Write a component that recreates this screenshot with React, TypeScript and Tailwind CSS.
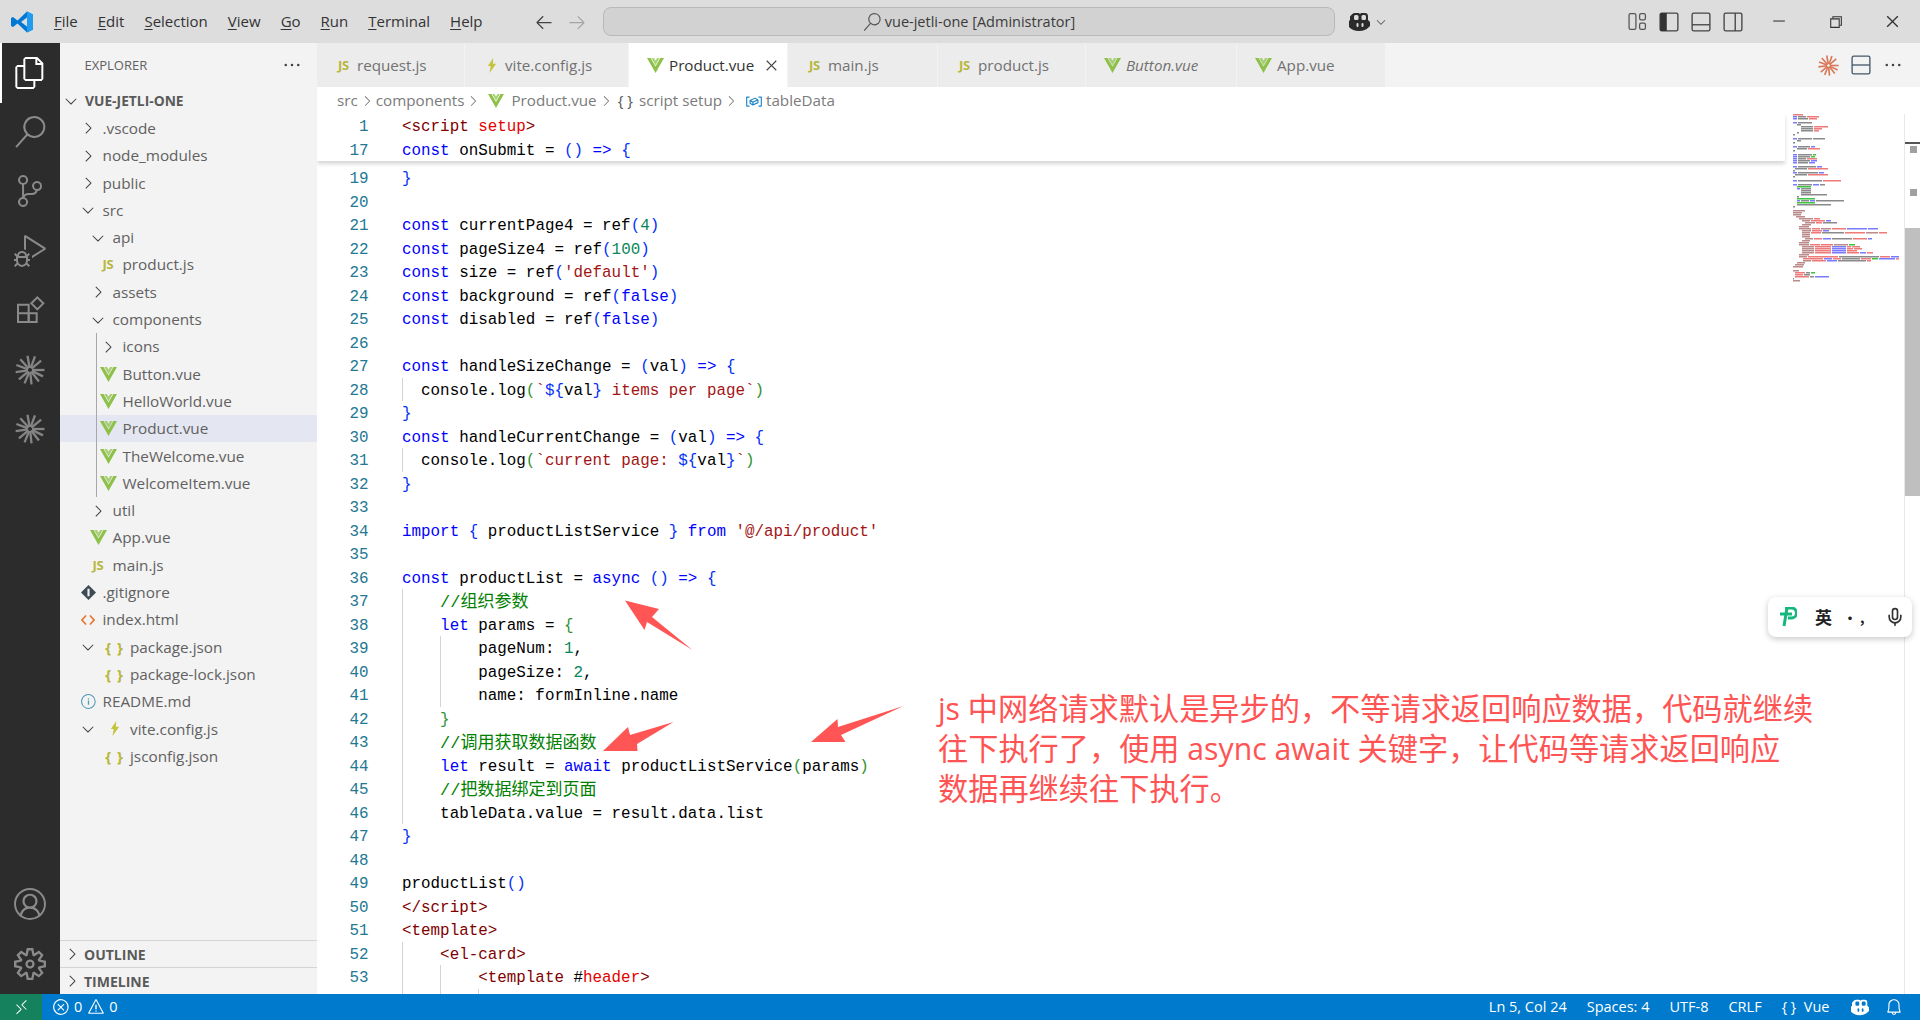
import type { ReactNode } from "react"
import {
  VscAccount,
  VscArrowLeft,
  VscArrowRight,
  VscBell,
  VscChevronDown,
  VscChevronRight,
  VscChromeClose,
  VscChromeMinimize,
  VscChromeRestore,
  VscClose,
  VscDebugAlt,
  VscEllipsis,
  VscError,
  VscFiles,
  VscInfo,
  VscRemote,
  VscSearch,
  VscSettingsGear,
  VscSourceControl,
  VscSymbolVariable,
  VscWarning,
} from "react-icons/vsc"
import { Mic } from "lucide-react"

const UI_FONT = "font-['Open_Sans','Noto_Sans_CJK_SC',sans-serif]"

function VueIcon({ className = "w-[17px] h-[15px]" }: { className?: string }) {
  return (
    <svg viewBox="0 0 17 15" className={className}>
      <path d="M0 0h3.6l4.9 8.6L13.4 0H17L8.5 15z" fill="#8dc149" />
      <path d="M4.4 0h2.5l1.6 2.8L10.1 0h2.5L8.5 7.2z" fill="#8dc149" opacity="0.75" />
    </svg>
  )
}

function JsIcon() {
  return <span className="text-[13px] font-bold text-[#b7b73b] leading-none tracking-tight">JS</span>
}

function BoltIcon() {
  return (
    <svg viewBox="0 0 12 18" className="w-[10px] h-[17px]">
      <path d="M7.5 0 1 9.5h3.4L3 18l8-11H7z" fill="#c4c43c" />
    </svg>
  )
}

function BracesIcon() {
  return <span className="text-[15px] font-bold text-[#b7b73b] leading-none tracking-[1px]">{"{ }"}</span>
}

function Burst({ color, size = 30 }: { color: string; size?: number }) {
  const spokes = [0, 26, 52, 84, 112, 140, 172, 200, 228, 260, 290, 320]
  return (
    <svg viewBox="-15 -15 30 30" width={size} height={size}>
      {spokes.map((a) => (
        <line
          key={a}
          x1={2 * Math.cos((a * Math.PI) / 180)}
          y1={2 * Math.sin((a * Math.PI) / 180)}
          x2={14.5 * Math.cos((a * Math.PI) / 180)}
          y2={14.5 * Math.sin((a * Math.PI) / 180)}
          stroke={color}
          strokeWidth="2.3"
        />
      ))}
    </svg>
  )
}

function CopilotFace({ fg, bg, className }: { fg: string; bg: string; className: string }) {
  return (
    <svg viewBox="0 0 22 20" className={className}>
      <path
        d="M6 1h3c1 0 1.6.5 2 1 .4-.5 1-1 2-1h3c2.200 0 3 1.500 3 3.500V8l2 2v4l-1 1c-2.500 2.500-5.500 4-10 4s-7.500-1.500-10-4l-1-1v-4l2-2V4.500C3 2.500 3.800 1 6 1z"
        fill={fg}
      />
      <rect x="5" y="3" width="4.500" height="5" rx="1.500" fill={bg} />
      <rect x="12.500" y="3" width="4.500" height="5" rx="1.500" fill={bg} />
      <rect x="7.500" y="11" width="2" height="4" rx="1" fill={bg} />
      <rect x="12.500" y="11" width="2" height="4" rx="1" fill={bg} />
    </svg>
  )
}

function ExtensionsIcon({ className }: { className?: string }) {
  return (
    <svg viewBox="0 0 24 24" className={className} fill="none" stroke="currentColor" strokeWidth="1.500">
      <path d="M3 8h8v13H3z" />
      <path d="M3 14.500h14V21h-6" />
      <path d="M11 14.500V21" />
      <path d="M17.500 2.500 22 7l-4.500 4.500L13 7z" />
    </svg>
  )
}

function TitleBar() {
  const menu: [string, string][] = [
    ["F", "ile"],
    ["E", "dit"],
    ["S", "election"],
    ["V", "iew"],
    ["G", "o"],
    ["R", "un"],
    ["T", "erminal"],
    ["H", "elp"],
  ]
  return (
    <div className="h-[43px] shrink-0 bg-[#dddddd] flex items-center text-[#333333] text-[15px]">
      <svg viewBox="0 0 24 24" className="w-[24px] h-[24px] ml-[10px] mr-[20px]">
        <path d="M17 1.500 23 4.500v15l-6 3L7.500 13.500 3 17l-2-1V8l2-1 4.500 3.500z" fill="#0078d4" />
        <path d="M17 7.500 11 12l6 4.500z" fill="#dddddd" />
        <path d="M17 1.500 23 4.500v15l-6 3z" fill="#1f9cf0" />
      </svg>
      <div className="flex gap-[20px] w-[471px]">
        {menu.map(([u, rest]) => (
          <span key={u}>
            <span className="underline underline-offset-2">{u}</span>
            {rest}
          </span>
        ))}
      </div>
      <VscArrowLeft className="w-[20px] h-[20px] ml-[9px] text-[#444444]" />
      <VscArrowRight className="w-[20px] h-[20px] ml-[13px] text-[#a5a5a5]" />
      <div className="ml-[16px] w-[732px] h-[29px] rounded-lg bg-[#d2d2d2] border border-[#b9b9b9] flex items-center justify-center gap-[4px] text-[14.500px] text-[#3b3b3b]">
        <VscSearch className="w-[18px] h-[18px] text-[#555555]" />
        <span>vue-jetli-one [Administrator]</span>
      </div>
      <CopilotFace fg="#2b2b2b" bg="#dddddd" className="w-[22px] h-[20px] ml-[14px]" />
      <VscChevronDown className="w-[14px] h-[14px] ml-[3px] text-[#555555]" />
      <svg viewBox="0 0 18 18" className="w-[19px] h-[19px] ml-[240px]" fill="none" stroke="#555555" strokeWidth="1.200">
        <rect x="1" y="1.500" width="6.500" height="15" rx="1.500" />
        <rect x="11" y="1.500" width="5.500" height="6" rx="1.500" />
        <rect x="11" y="10.500" width="5.500" height="6" rx="1.500" />
      </svg>
      <svg viewBox="0 0 18 18" className="w-[20px] h-[20px] ml-[12px]" fill="none" stroke="#444444" strokeWidth="1.200">
        <rect x="1" y="1" width="16" height="16" rx="1.500" />
        <path d="M1 2.500A1.500 1.500 0 0 1 2.500 1H7v16H2.500A1.500 1.500 0 0 1 1 15.500z" fill="#333333" stroke="none" />
      </svg>
      <svg viewBox="0 0 18 18" className="w-[20px] h-[20px] ml-[12px]" fill="none" stroke="#444444" strokeWidth="1.200">
        <rect x="1" y="1" width="16" height="16" rx="1.500" />
        <path d="M1 11.500h16" />
      </svg>
      <svg viewBox="0 0 18 18" className="w-[20px] h-[20px] ml-[12px]" fill="none" stroke="#444444" strokeWidth="1.200">
        <rect x="1" y="1" width="16" height="16" rx="1.500" />
        <path d="M11 1v16" />
      </svg>
      <VscChromeMinimize className="w-[17px] h-[17px] ml-[27px] shrink-0 text-[#333333] -translate-y-[1px]" />
      <VscChromeRestore className="w-[17px] h-[17px] ml-[40px] shrink-0 text-[#333333]" />
      <VscChromeClose className="w-[17px] h-[17px] ml-[40px] shrink-0 text-[#333333]" />
    </div>
  )
}

function ActivityBar() {
  const top = [VscSearch, VscSourceControl, VscDebugAlt, ExtensionsIcon]
  return (
    <div className="w-[60px] shrink-0 bg-[#2c2c2c] flex flex-col items-center relative text-[#8a8a8a]">
      <div className="absolute left-0 top-0 w-[2px] h-[60px] bg-white" />
      <div className="h-[59px] flex items-center">
        <VscFiles className="w-[32px] h-[32px] text-white" />
      </div>
      {top.map((Icon, i) => (
        <div key={i} className="h-[59.500px] flex items-center">
          <Icon className="w-[32px] h-[32px]" />
        </div>
      ))}
      <div className="h-[59.500px] flex items-center">
        <Burst color="#858585" />
      </div>
      <div className="h-[59.500px] flex items-center">
        <Burst color="#858585" />
      </div>
      <div className="mt-auto h-[60px] flex items-center">
        <VscAccount className="w-[32px] h-[32px]" />
      </div>
      <div className="h-[60px] flex items-center">
        <VscSettingsGear className="w-[32px] h-[32px]" />
      </div>
    </div>
  )
}

interface RowProps {
  pad: string
  label: string
  chev?: "r" | "d"
  icon?: ReactNode
  nested?: ReactNode
  selected?: boolean
}

function Row({ pad, label, chev, icon, nested, selected }: RowProps) {
  return (
    <div className={`h-[27.300px] flex items-center gap-[4.500px] text-[15.300px] text-[#616161] ${pad} ${selected ? "bg-[#e4e6f1]" : ""}`}>
      <span className="w-[20px] flex items-center justify-center text-[#424242]">
        {chev === "r" && <VscChevronRight className="w-[18px] h-[18px]" />}
        {chev === "d" && <VscChevronDown className="w-[18px] h-[18px]" />}
        {icon}
      </span>
      {nested && <span className="w-[20px] ml-[2px] mr-[1px] flex items-center justify-center">{nested}</span>}
      <span>{label}</span>
    </div>
  )
}

function Sidebar() {
  return (
    <div className={`w-[257px] shrink-0 bg-[#f3f3f3] flex flex-col ${UI_FONT}`}>
      <div className="h-[44.500px] shrink-0 flex items-center justify-between pl-[24.500px] pr-[15px] text-[13px] text-[#616161]">
        <span>EXPLORER</span>
        <VscEllipsis className="w-[20px] h-[20px] text-[#424242]" />
      </div>
      <div className="h-[27.300px] flex items-center gap-[4px] pl-[1px] text-[13.800px] font-bold text-[#5a5a5a]">
        <span className="w-[20px] flex justify-center text-[#424242]">
          <VscChevronDown className="w-[18px] h-[18px]" />
        </span>
        VUE-JETLI-ONE
      </div>
      <Row pad="pl-[18px]" chev="r" label=".vscode" />
      <Row pad="pl-[18px]" chev="r" label="node_modules" />
      <Row pad="pl-[18px]" chev="r" label="public" />
      <Row pad="pl-[18px]" chev="d" label="src" />
      <Row pad="pl-[28px]" chev="d" label="api" />
      <Row pad="pl-[38px]" icon={<JsIcon />} label="product.js" />
      <Row pad="pl-[28px]" chev="r" label="assets" />
      <Row pad="pl-[28px]" chev="d" label="components" />
      <div className="relative">
        <div className="absolute left-[36px] top-0 bottom-0 w-px bg-[#a8a8a8]" />
        <Row pad="pl-[38px]" chev="r" label="icons" />
        <Row pad="pl-[38px]" icon={<VueIcon />} label="Button.vue" />
        <Row pad="pl-[38px]" icon={<VueIcon />} label="HelloWorld.vue" />
        <Row pad="pl-[38px]" icon={<VueIcon />} label="Product.vue" selected />
        <Row pad="pl-[38px]" icon={<VueIcon />} label="TheWelcome.vue" />
        <Row pad="pl-[38px]" icon={<VueIcon />} label="WelcomeItem.vue" />
      </div>
      <Row pad="pl-[28px]" chev="r" label="util" />
      <Row pad="pl-[28px]" icon={<VueIcon />} label="App.vue" />
      <Row pad="pl-[28px]" icon={<JsIcon />} label="main.js" />
      <Row
        pad="pl-[18px]"
        icon={
          <svg viewBox="0 0 14 14" className="w-[15px] h-[15px]">
            <path d="M7 0l7 7-7 7-7-7z" fill="#3b4b55" />
            <path d="M6 3.500h2v7H6z" fill="#f3f3f3" />
          </svg>
        }
        label=".gitignore"
      />
      <Row
        pad="pl-[18px]"
        icon={
          <svg viewBox="0 0 14 12" className="w-[14px] h-[12px]" fill="none" strokeWidth="1.700">
            <path d="M5 1.500 1 6l4 4.500" stroke="#e37933" />
            <path d="M9 1.500 13 6l-4 4.500" stroke="#e37933" />
          </svg>
        }
        label="index.html"
      />
      <Row pad="pl-[18px]" chev="d" nested={<BracesIcon />} label="package.json" />
      <Row pad="pl-[18px]" nested={<BracesIcon />} label="package-lock.json" />
      <Row pad="pl-[18px]" icon={<VscInfo className="w-[17px] h-[17px] text-[#519aba]" />} label="README.md" />
      <Row pad="pl-[18px]" chev="d" nested={<BoltIcon />} label="vite.config.js" />
      <Row pad="pl-[18px]" nested={<BracesIcon />} label="jsconfig.json" />
      <div className="mt-auto">
        {["OUTLINE", "TIMELINE"].map((t) => (
          <div key={t} className="h-[27px] border-t border-[#d4d4d4] flex items-center gap-[2px] pl-[2px] text-[14px] font-bold text-[#5a5a5a]">
            <span className="w-[20px] flex justify-center text-[#424242]">
              <VscChevronRight className="w-[18px] h-[18px]" />
            </span>
            {t}
          </div>
        ))}
      </div>
    </div>
  )
}

const TABS: { label: string; icon: ReactNode; width: string; active?: boolean; italic?: boolean }[] = [
  { label: "request.js", icon: <JsIcon />, width: "w-[148px]" },
  { label: "vite.config.js", icon: <BoltIcon />, width: "w-[164px]" },
  { label: "Product.vue", icon: <VueIcon />, width: "w-[159px]", active: true },
  { label: "main.js", icon: <JsIcon />, width: "w-[150px]" },
  { label: "product.js", icon: <JsIcon />, width: "w-[148px]" },
  { label: "Button.vue", icon: <VueIcon />, width: "w-[151px]", italic: true },
  { label: "App.vue", icon: <VueIcon />, width: "w-[149px]" },
]

function TabBar() {
  return (
    <div className={`h-[44px] shrink-0 bg-[#f3f3f3] flex ${UI_FONT}`}>
      {TABS.map((t) => (
        <div
          key={t.label}
          className={`${t.width} shrink-0 flex items-center gap-[5px] pl-[18px] border-r border-[#f3f3f3] text-[15.200px] ${
            t.active ? "bg-white text-[#333333]" : "bg-[#ececec] text-[#727272]"
          } ${t.italic ? "italic" : ""}`}
        >
          <span className="w-[17px] flex justify-center">{t.icon}</span>
          <span>{t.label}</span>
          {t.active && <VscClose className="w-[19px] h-[19px] ml-[3px] text-[#424242]" />}
        </div>
      ))}
      <div className="ml-auto flex items-center gap-[12px] pr-[17px]">
        <Burst color="#d97757" size={21} />
        <svg viewBox="0 0 18 18" className="w-[20px] h-[20px]" fill="none" stroke="#44586b" strokeWidth="1.200">
          <rect x="1" y="1" width="16" height="16" rx="1.500" />
          <path d="M1 9h16" />
        </svg>
        <VscEllipsis className="w-[20px] h-[20px] text-[#424242]" />
      </div>
    </div>
  )
}

function Breadcrumb() {
  const chev = <VscChevronRight className="w-[16px] h-[16px] text-[#777777]" />
  return (
    <div className={`h-[27.250px] shrink-0 flex items-center gap-[1px] pl-[20px] text-[15.200px] text-[#7b7b7b] ${UI_FONT}`}>
      <span>src</span>
      {chev}
      <span>components</span>
      {chev}
      <VueIcon className="w-[16px] h-[14px] ml-[6px] mr-[6px]" />
      <span>Product.vue</span>
      {chev}
      <span className="text-[#555555] ml-[3px] mr-[5px]">{"{ }"}</span>
      <span>script setup</span>
      {chev}
      <VscSymbolVariable className="w-[18px] h-[18px] ml-[5px] mr-[2px] text-[#1a85c9]" />
      <span>tableData</span>
    </div>
  )
}

const TOKEN_COLORS = {
  k: "text-[#0000ff]",
  b: "text-[#0431fa]",
  g: "text-[#319331]",
  t: "text-black",
  s: "text-[#a31515]",
  n: "text-[#098658]",
  c: "text-[#008000] text-[17px]",
  m: "text-[#800000]",
  a: "text-[#e50000]",
}

type Tok = [keyof typeof TOKEN_COLORS, string]
type CodeLine = { n: number; guides?: number[]; toks?: Tok[] }

const STICKY: CodeLine[] = [
  { n: 1, toks: [["m", "<script "], ["a", "setup"], ["m", ">"]] },
  { n: 17, toks: [["k", "const "], ["t", "onSubmit = "], ["b", "()"], ["k", " => "], ["b", "{"]] },
]

const constRef = (name: string, arg: Tok): Tok[] => [
  ["k", "const "],
  ["t", `${name} = ref`],
  ["b", "("],
  arg,
  ["b", ")"],
]

const CODE: CodeLine[] = [
  { n: 19, toks: [["b", "}"]] },
  { n: 20 },
  { n: 21, toks: constRef("currentPage4", ["n", "4"]) },
  { n: 22, toks: constRef("pageSize4", ["n", "100"]) },
  { n: 23, toks: constRef("size", ["s", "'default'"]) },
  { n: 24, toks: constRef("background", ["k", "false"]) },
  { n: 25, toks: constRef("disabled", ["k", "false"]) },
  { n: 26 },
  { n: 27, toks: [["k", "const "], ["t", "handleSizeChange = "], ["b", "("], ["t", "val"], ["b", ")"], ["k", " => "], ["b", "{"]] },
  { n: 28, guides: [0], toks: [["t", "  console.log"], ["g", "("], ["s", "`"], ["b", "${"], ["t", "val"], ["b", "}"], ["s", " items per page`"], ["g", ")"]] },
  { n: 29, toks: [["b", "}"]] },
  { n: 30, toks: [["k", "const "], ["t", "handleCurrentChange = "], ["b", "("], ["t", "val"], ["b", ")"], ["k", " => "], ["b", "{"]] },
  { n: 31, guides: [0], toks: [["t", "  console.log"], ["g", "("], ["s", "`current page: "], ["b", "${"], ["t", "val"], ["b", "}"], ["s", "`"], ["g", ")"]] },
  { n: 32, toks: [["b", "}"]] },
  { n: 33 },
  { n: 34, toks: [["k", "import "], ["b", "{ "], ["t", "productListService "], ["b", "}"], ["k", " from "], ["s", "'@/api/product'"]] },
  { n: 35 },
  { n: 36, toks: [["k", "const "], ["t", "productList = "], ["k", "async "], ["b", "()"], ["k", " => "], ["b", "{"]] },
  { n: 37, guides: [0], toks: [["t", "    "], ["c", "//组织参数"]] },
  { n: 38, guides: [0], toks: [["k", "    let "], ["t", "params = "], ["g", "{"]] },
  { n: 39, guides: [0, 1], toks: [["t", "        pageNum: "], ["n", "1"], ["t", ","]] },
  { n: 40, guides: [0, 1], toks: [["t", "        pageSize: "], ["n", "2"], ["t", ","]] },
  { n: 41, guides: [0, 1], toks: [["t", "        name: formInline.name"]] },
  { n: 42, guides: [0], toks: [["g", "    }"]] },
  { n: 43, guides: [0], toks: [["t", "    "], ["c", "//调用获取数据函数"]] },
  { n: 44, guides: [0], toks: [["k", "    let "], ["t", "result = "], ["k", "await "], ["t", "productListService"], ["g", "("], ["t", "params"], ["g", ")"]] },
  { n: 45, guides: [0], toks: [["t", "    "], ["c", "//把数据绑定到页面"]] },
  { n: 46, guides: [0], toks: [["t", "    tableData.value = result.data.list"]] },
  { n: 47, toks: [["b", "}"]] },
  { n: 48 },
  { n: 49, toks: [["t", "productList"], ["b", "()"]] },
  { n: 50, toks: [["m", "</script>"]] },
  { n: 51, toks: [["m", "<template>"]] },
  { n: 52, guides: [0], toks: [["m", "    <el-card>"]] },
  { n: 53, guides: [0, 1], toks: [["m", "        <template "], ["t", "#"], ["a", "header"], ["m", ">"]] },
  // only the indent guides of the next line peek out above the status bar
  { n: 0, guides: [0, 1, 2] },
]

function CodeRow({ line }: { line: CodeLine }) {
  return (
    <div className="h-[23.500px] shrink-0 flex whitespace-pre text-[15.880px] leading-[27.500px] font-['Liberation_Mono','Noto_Sans_CJK_SC',monospace]">
      <span className="w-[51.500px] shrink-0 text-right text-[#237893]">{line.n || ""}</span>
      <span className="relative ml-[33.500px] flex-1">
        {line.guides?.map((g) => (
          <span
            key={g}
            className="absolute top-0 bottom-0 w-px bg-[#d3d3d3]"
            style={{ left: g * 38.2 }}
          />
        ))}
        {line.toks?.map(([kind, text], i) => (
          <span key={i} className={TOKEN_COLORS[kind]}>
            {text}
          </span>
        ))}
      </span>
    </div>
  )
}

const MINI_ROWS = [
  "0 R10", "0 B4 K8 R12", "0 B4 K10 R8", "", "0 B4 K14", "4 K4", "8 K12 R14", "8 K12 R8", "8 K12 R5", "4 K2", "0 K2", "",
  "0 B4 K14 K12", "4 K4", "0 K2", "", "0 B4 K12 B4", "4 K10 R12", "0 K2", "",
  "0 B4 K14 G3", "0 B4 K12 G4", "0 B4 K8 R10", "0 B4 K12 B6", "0 B4 K10 B6", "",
  "0 B4 K18 B5", "2 K12 R20", "0 K2", "0 B4 K20 B5", "2 K12 R20", "0 K2", "",
  "0 B4 K24 R18", "", "0 B4 K14 B6 K5", "4 G14", "4 B3 K10", "8 K10", "8 K10", "8 K26", "4 K2", "4 G18", "4 B3 K8 B5 K28", "4 G18", "4 K34", "0 K2", "",
  "0 M12", "0 M9", "0 M8", "3 M9", "6 M14 R6", "9 M8 R14 B5", "12 M10 R6 K14", "9 M9", "6 M10", "6 M12 R8 M10 R14 B20 B10", "9 M9 R10 B6", "9 M8 R10 K22 R20 M12 R8", "9 M8", "9 M8", "12 M8 R8 B8 K20 R14 B4", "9 M8", "6 M10",
  "6 M10 R10 R12 M14 G6", "9 M12 R16 B14 R4 R8", "9 M12 R16 B14 R6 R8", "9 M12 R16 B14 R10", "9 M12 R16 B14 R12 B6 R6", "6 M10", "6 M8 R30 K40 R10 B12 K30 K12", "10 R20 B8 R8 K18 R10 G6 B16 R10 K30", "10 M8 R14 B10 K28 R4", "4 M8", "2 M9", "0 M10", "", "0 M6", "2 R10 K4 G4", "2 R8 K6", "2 R14 K4 B14", "0 K1", "0 M7",
]

const MINI_COLORS: Record<string, string> = {
  R: "#ee7a7a",
  B: "#7a7aff",
  K: "#8a8a8a",
  G: "#3fc43f",
  M: "#bb8a8a",
}

function Minimap() {
  return (
    <svg className="absolute left-[1476px] top-[27px] w-[106px] h-[172px]" viewBox="0 0 106 172">
      {MINI_ROWS.flatMap((row, y) => {
        if (!row) return []
        const [indent, ...segs] = row.split(" ")
        let x = Number(indent)
        return segs.map((s, i) => {
          const w = Number(s.slice(1))
          const rect = <rect key={`${y}-${i}`} x={x} y={y * 2} width={w} height={1.500} fill={MINI_COLORS[s[0]]} />
          x += w + 1
          return rect
        })
      })}
    </svg>
  )
}

function OverviewRuler() {
  return (
    <div className="absolute right-0 top-[27px] bottom-0 w-[16px] border-l border-[#e8e8e8] bg-white">
      <div className="absolute left-0 right-0 top-[28px] h-[2px] bg-[#555555]" />
      <div className="absolute left-[5px] w-[7px] h-[7px] top-[32px] bg-[#a0a0a0]" />
      <div className="absolute left-[5px] w-[7px] h-[7px] top-[75px] bg-[#a0a0a0]" />
      <div className="absolute left-0 right-0 top-[114px] h-[268px] bg-[#bfbfbf]" />
    </div>
  )
}

function Editor() {
  return (
    <div className="flex-1 min-w-0 flex flex-col bg-white">
      <TabBar />
      <div className="flex-1 min-h-0 relative overflow-hidden flex flex-col">
        <Breadcrumb />
        <div className="w-[1468px] shrink-0 bg-white relative z-10 shadow-[0_3px_4px_rgba(0,0,0,0.16)]">
          {STICKY.map((l) => (
            <CodeRow key={l.n} line={l} />
          ))}
        </div>
        <div className="mt-[5px] flex flex-col">
          {CODE.map((l) => (
            <CodeRow key={l.n} line={l} />
          ))}
        </div>
        <Minimap />
        <OverviewRuler />
      </div>
    </div>
  )
}

function StatusBar() {
  return (
    <div className={`h-[26px] shrink-0 bg-[#007acc] text-white flex items-center text-[14.500px] ${UI_FONT}`}>
      <div className="w-[42px] h-full bg-[#16825d] flex items-center justify-center">
        <VscRemote className="w-[17px] h-[17px]" />
      </div>
      <VscError className="w-[18px] h-[18px] ml-[10px]" />
      <span className="ml-[4px]">0</span>
      <VscWarning className="w-[18px] h-[18px] ml-[5px]" />
      <span className="ml-[4px]">0</span>
      <div className="ml-auto flex items-center gap-[20px] pr-[17px]">
        <span>Ln 5, Col 24</span>
        <span>Spaces: 4</span>
        <span>UTF-8</span>
        <span>CRLF</span>
        <span>{"{ }"}&nbsp;&nbsp;Vue</span>
        <CopilotFace fg="#ffffff" bg="#007acc" className="w-[19px] h-[17px] ml-[1px]" />
        <VscBell className="w-[18px] h-[18px] -ml-[4.500px]" />
      </div>
    </div>
  )
}

function Annotations() {
  return (
    <>
      <svg className="absolute inset-0 w-[1920px] h-[1020px] pointer-events-none" viewBox="0 0 1920 1020">
        <path d="M625 600.500 659 609 652 617 692.500 650 647 622 644.500 630z" fill="#ff5555" />
        <path d="M603 751 628 727 630 735 673.500 722 637 744 637.500 751z" fill="#ff5555" />
        <path d="M811 742 837.500 719 838 727 903.500 706 841 735 845.500 742z" fill="#ff5555" />
      </svg>
      <div className="absolute left-[938px] top-[689px] text-[30.200px] leading-[40px] text-[#ff5454] whitespace-nowrap font-['Open_Sans','Noto_Sans_CJK_SC',sans-serif]">
        <div>js 中网络请求默认是异步的，不等请求返回响应数据，代码就继续</div>
        <div>往下执行了，使用 async await 关键字，让代码等请求返回响应</div>
        <div>数据再继续往下执行。</div>
      </div>
      <div className="absolute left-[1768px] top-[597px] w-[144px] h-[40px] rounded-lg bg-white shadow-[0_2px_6px_rgba(0,0,0,0.22)] flex items-center pl-[11px] text-[#222222] font-['Noto_Sans_CJK_SC',sans-serif]">
        <svg viewBox="0 0 18 20" className="w-[18px] h-[20px]">
          <path d="M6 1h6.500a4.500 4.500 0 0 1 0 10H9M8 1 5 19M1 7h12" fill="none" stroke="#14b87c" strokeWidth="3" />
        </svg>
        <span className="ml-[18px] text-[17px] font-bold">英</span>
        <span className="ml-[11px] text-[14px] font-bold tracking-[3px]">•,</span>
        <Mic className="w-[20px] h-[20px] ml-[17px] text-[#333333]" />
      </div>
    </>
  )
}

export default function App() {
  return (
    <div className={`relative w-[1920px] h-[1020px] overflow-hidden flex flex-col ${UI_FONT}`}>
      <TitleBar />
      <div className="flex-1 min-h-0 flex">
        <ActivityBar />
        <Sidebar />
        <Editor />
      </div>
      <StatusBar />
      <Annotations />
    </div>
  )
}
